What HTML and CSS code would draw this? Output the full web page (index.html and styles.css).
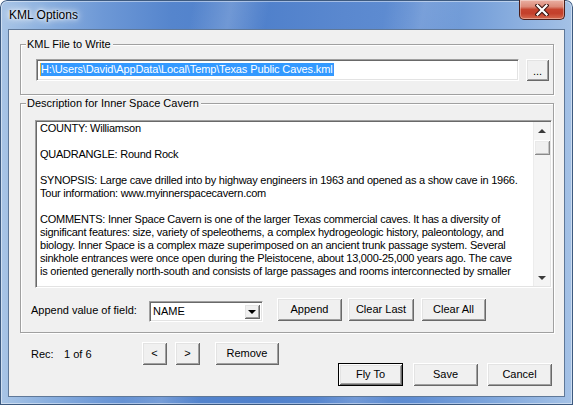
FILE: index.html
```html
<!DOCTYPE html>
<html>
<head>
<meta charset="utf-8">
<title>KML Options</title>
<link rel="stylesheet" href="styles.css">
</head>
<body>
<div class="window">
  <div class="titlebar">
    <span class="title">KML Options</span>
    <div class="close">
      <svg width="14" height="12" viewBox="0 0 14 12">
        <path d="M2.5 1.5 L11.5 10.5 M11.5 1.5 L2.5 10.5" stroke="#3b1410" stroke-width="4.2" stroke-linecap="square" fill="none"/>
        <path d="M2.5 1.5 L11.5 10.5 M11.5 1.5 L2.5 10.5" stroke="#ffffff" stroke-width="2.2" stroke-linecap="square" fill="none"/>
      </svg>
    </div>
  </div>
  <div class="client">
    <div class="group group-file">
      <span class="group-label">KML File to Write</span>
      <div class="file-row">
        <div class="field file-field"><span class="caret"></span><span class="selected">H:\Users\David\AppData\Local\Temp\Texas Public Caves.kml</span></div>
        <div class="btn btn-dots">...</div>
      </div>
    </div>
    <div class="group group-desc">
      <span class="group-label">Description for Inner Space Cavern</span>
      <div class="memo">
        <div class="memo-text">
          <div class="line">COUNTY: Williamson</div>
          <div class="line"></div>
          <div class="line">QUADRANGLE: Round Rock</div>
          <div class="line"></div>
          <div class="line">SYNOPSIS: Large cave drilled into by highway engineers in 1963 and opened as a show cave in 1966.</div>
          <div class="line">Tour information: www.myinnerspacecavern.com</div>
          <div class="line"></div>
          <div class="line">COMMENTS: Inner Space Cavern is one of the larger Texas commercial caves. It has a diversity of</div>
          <div class="line">significant features: size, variety of speleothems, a complex hydrogeologic history, paleontology, and</div>
          <div class="line">biology. Inner Space is a complex maze superimposed on an ancient trunk passage system. Several</div>
          <div class="line">sinkhole entrances were once open during the Pleistocene, about 13,000-25,000 years ago. The cave</div>
          <div class="line">is oriented generally north-south and consists of large passages and rooms interconnected by smaller</div>
        </div>
        <div class="vscroll">
          <div class="arrow arrow-up"></div>
          <div class="thumb"></div>
          <div class="track"></div>
          <div class="arrow arrow-down"></div>
        </div>
      </div>
      <div class="append-row">
        <span class="append-label">Append value of field:</span>
        <div class="field combo"><span class="combo-text">NAME</span><div class="combo-drop"><span class="tri-down"></span></div></div>
        <div class="btn btn-append">Append</div>
        <div class="btn btn-clearlast">Clear Last</div>
        <div class="btn btn-clearall">Clear All</div>
      </div>
    </div>
    <div class="footer">
      <div class="rec-row">
        <span class="rec-label">Rec:</span>
        <span class="rec-value">1 of 6</span>
        <div class="btn btn-nav">&lt;</div>
        <div class="btn btn-nav btn-next">&gt;</div>
        <div class="btn btn-remove">Remove</div>
      </div>
      <div class="actions">
        <div class="btn btn-action btn-default">Fly To</div>
        <div class="btn btn-action">Save</div>
        <div class="btn btn-action">Cancel</div>
      </div>
    </div>
  </div>
</div>
</body>
</html>
```

FILE: styles.css
```css
* { box-sizing: border-box; }

html, body {
  margin: 0;
  padding: 0;
  width: 573px;
  height: 405px;
  overflow: hidden;
  background: #ffffff;
}

body {
  font-family: "Liberation Sans", Arial, sans-serif;
  font-size: 11px;
  color: #000;
}

.window {
  width: 573px;
  height: 405px;
  display: flex;
  flex-direction: column;
  border-radius: 7px 7px 0 0;
  background:
    linear-gradient(100deg, rgba(255,255,255,0) 30%, rgba(255,255,255,0.18) 36%, rgba(255,255,255,0) 42%, rgba(255,255,255,0) 60%, rgba(255,255,255,0.14) 66%, rgba(255,255,255,0) 72%),
    linear-gradient(90deg, #a9c5e6 0%, #8bb0df 8%, #6d98d6 18%, #5585cd 30%, #4f80cb 45%, #5a88cf 60%, #5f8dd2 72%, #7ca4db 85%, #a5c2e6 100%);
  box-shadow: inset 0 0 0 1px #3d5a80, inset 0 0 0 2px rgba(255,255,255,0.45);
}

.titlebar {
  height: 29px;
  display: flex;
  align-items: flex-start;
  flex-shrink: 0;
}

.title {
  margin: 7px 0 0 9px;
  font-size: 12px;
  line-height: 16px;
  color: #000;
  text-shadow: 0 0 6px #fff, 0 0 10px #fff, 0 0 3px rgba(255,255,255,0.9);
}

.close {
  margin-left: auto;
  margin-right: 8px;
  width: 46px;
  height: 20px;
  border: 1px solid #4a1e1a;
  border-top: none;
  border-radius: 0 0 5px 5px;
  background: linear-gradient(180deg, #eab0a3 0%, #dc8a79 35%, #c6442f 50%, #c33f2b 70%, #d56a4f 100%);
  box-shadow: inset 0 0 0 1px rgba(255,255,255,0.35);
  display: flex;
  align-items: center;
  justify-content: center;
}

.close svg { display: block; margin-top: 0; }

.client {
  flex: 1;
  margin: 0 8px 8px;
  background: #f0f0f0;
  border: 1px solid #5f7898;
  display: flex;
  flex-direction: column;
}

/* group boxes */
.group {
  position: relative;
  margin: 0 10px 0 11px;
  border: 1px solid #a0a0a0;
  box-shadow: inset 1px 1px 0 #fff, 1px 1px 0 #fff;
}

.group-label {
  position: absolute;
  top: -7px;
  left: 5px;
  padding: 0 2px 0 1px;
  line-height: 13px;
  background: #f0f0f0;
  white-space: nowrap;
}

.group-file {
  margin-top: 14px;
  padding: 14px 4px 13px 15px;
}

.group-desc {
  margin-top: 8px;
  padding: 16px 1px 10px 10px;
}

/* sunken field */
.field {
  background: #fff;
  border: 1px solid;
  border-color: #a0a0a0 #fff #fff #a0a0a0;
  box-shadow: inset 1px 1px 0 #696969, inset -1px -1px 0 #e3e3e3;
}

/* raised button */
.btn {
  display: flex;
  align-items: center;
  justify-content: center;
  height: 23px;
  background: #f0f0f0;
  box-shadow: inset 1px 1px 0 #fff, inset -1px -1px 0 #696969, inset 2px 2px 0 #e3e3e3, inset -2px -2px 0 #a0a0a0;
  white-space: nowrap;
  padding-bottom: 1px;
}

.file-row {
  display: flex;
  align-items: flex-start;
}

.file-field {
  width: 483px;
  height: 22px;
  padding: 3px 0 0 4px;
  display: flex;
  align-items: flex-start;
  position: relative;
}

.caret {
  position: absolute;
  left: 3px;
  top: 3px;
  width: 1px;
  height: 13px;
  background: #e8b23a;
}

.selected {
  background: #3399ff;
  color: #fff;
  line-height: 13px;
  white-space: nowrap;
  letter-spacing: -0.12px;
  padding-right: 1px;
}

.btn-dots {
  margin-left: 7px;
  width: 23px;
  height: 22px;
  align-items: flex-end;
  padding-bottom: 5px;
  line-height: 9px;
}

/* memo */
.memo {
  margin-left: 4px;
  width: 517px;
  height: 168px;
  display: flex;
  background: #fff;
  border: 1px solid;
  border-color: #a0a0a0 #fff #fff #a0a0a0;
  box-shadow: inset 1px 1px 0 #696969, inset -1px -1px 0 #e3e3e3;
  padding: 1px 1px 1px 1px;
}

.memo-text {
  flex: 1;
  overflow: hidden;
  padding: 0 0 0 3px;
}

.line {
  height: 13px;
  line-height: 13px;
  white-space: nowrap;
  letter-spacing: -0.24px;
}

.vscroll {
  width: 17px;
  display: flex;
  flex-direction: column;
  background: #f4f4f4;
  border-left: 1px solid #ececec;
}

.arrow {
  height: 17px;
  display: flex;
  align-items: center;
  justify-content: center;
  flex-shrink: 0;
}

.arrow-up::after {
  content: "";
  border-left: 4px solid transparent;
  border-right: 4px solid transparent;
  border-bottom: 4px solid #3a3a3a;
}

.arrow-down::after {
  content: "";
  border-left: 4px solid transparent;
  border-right: 4px solid transparent;
  border-top: 4px solid #3a3a3a;
}

.thumb {
  height: 15px;
  margin-top: 1px;
  flex-shrink: 0;
  background: #f0f0f0;
  box-shadow: inset 1px 1px 0 #fff, inset -1px -1px 0 #8a8a8a, inset 2px 2px 0 #eaeaea, inset -2px -2px 0 #c4c4c4;
}

.track { flex: 1; }

/* append row */
.append-row {
  margin-top: 10px;
  display: flex;
  align-items: flex-start;
  height: 24px;
}

.append-label {
  width: 118px;
  line-height: 13px;
  margin-top: 6px;
  white-space: nowrap;
}

.combo {
  margin-top: 3px;
  width: 114px;
  height: 21px;
  display: flex;
  align-items: stretch;
  padding: 2px;
}

.combo-text {
  flex: 1;
  line-height: 15px;
  padding-left: 1px;
}

.combo-drop {
  width: 16px;
  background: #f0f0f0;
  box-shadow: inset 1px 1px 0 #fff, inset -1px -1px 0 #696969, inset 2px 2px 0 #e3e3e3, inset -2px -2px 0 #a0a0a0;
  display: flex;
  align-items: center;
  justify-content: center;
}

.tri-down {
  border-left: 4px solid transparent;
  border-right: 4px solid transparent;
  border-top: 4px solid #000;
  margin-top: 1px;
}

.btn-append { margin-left: 14px; width: 65px; }
.btn-clearlast { margin-left: 6px; width: 66px; }
.btn-clearall { margin-left: 7px; width: 65px; }

/* footer */
.footer {
  flex: 1;
  display: flex;
  justify-content: space-between;
  padding: 9px 12px 10px 22px;
}

.rec-row {
  align-self: flex-start;
  display: flex;
  align-items: center;
  height: 23px;
}

.rec-label { width: 33px; }
.rec-value { width: 78px; }

.btn-nav { width: 25px; }
.btn-next { margin-left: 8px; }
.btn-remove { margin-left: 15px; width: 64px; }

.actions {
  align-self: flex-end;
  display: flex;
}

.btn-action { width: 65px; margin-left: 10px; }
.btn-action:last-child { margin-left: 9px; }
.btn-action:first-child { margin-left: 0; }

.btn-default {
  box-shadow: inset 0 0 0 1px #000, inset 2px 2px 0 #fff, inset -2px -2px 0 #696969, inset 3px 3px 0 #e3e3e3, inset -3px -3px 0 #a0a0a0;
}
```
